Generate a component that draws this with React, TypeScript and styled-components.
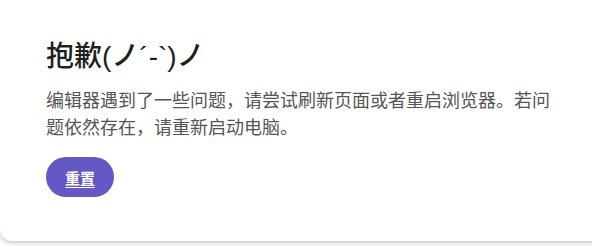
import React from 'react';
import styled, { createGlobalStyle } from 'styled-components';

const GlobalStyle = createGlobalStyle`
  html, body {
    margin: 0;
    padding: 0;
    background: #ffffff;
    overflow: hidden;
  }
  body {
    font-family: 'Noto Sans', 'Noto Sans CJK SC', sans-serif;
  }
`;

const Page = styled.div`
  width: 592px;
  height: 247px;
  overflow: hidden;
`;

const Card = styled.div`
  box-sizing: border-box;
  width: 610px;
  height: 251px;
  margin-top: -10px;
  padding: 47px 46px 0 46px;
  background: #ffffff;
  border-radius: 12px;
  box-shadow: 0 2px 4px rgba(0, 0, 0, 0.22);
`;

const Title = styled.h1`
  margin: 0;
  font-family: 'Liberation Sans', 'Noto Sans CJK SC', sans-serif;
  font-size: 28px;
  font-weight: 500;
  line-height: 40px;
  color: #1f1f1f;
`;

const Message = styled.p`
  width: 505px;
  margin: 9px 0 0 0;
  font-family: 'Noto Sans CJK SC', sans-serif;
  font-size: 18px;
  font-weight: 400;
  line-height: 27px;
  color: #555555;
`;

const ResetButton = styled.button`
  display: block;
  margin-top: 17px;
  width: 68px;
  height: 40px;
  border: none;
  border-radius: 20px;
  background: #6658c4;
  color: #ffffff;
  font-family: 'Noto Sans CJK SC', sans-serif;
  font-size: 15px;
  font-weight: 700;
  text-decoration: underline;
  text-underline-offset: 3px;
  cursor: pointer;
`;

export default function App() {
  return (
    <Page>
      <GlobalStyle />
      <Card>
        <Title>抱歉(ノ´-`)ノ</Title>
        <Message>
          编辑器遇到了一些问题，请尝试刷新页面或者重启浏览器。若问题依然存在，请重新启动电脑。
        </Message>
        <ResetButton>重置</ResetButton>
      </Card>
    </Page>
  );
}
